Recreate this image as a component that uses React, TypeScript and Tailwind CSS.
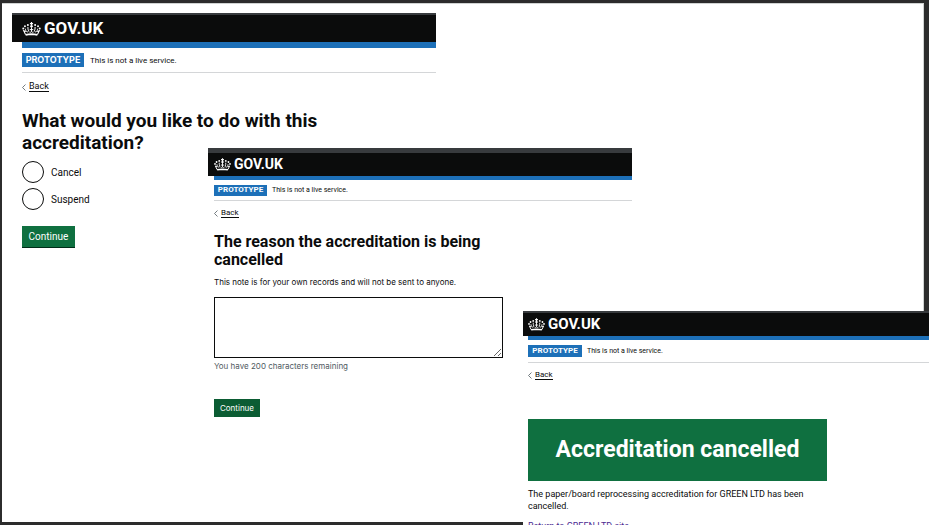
import type { ReactNode } from "react";

function Crown({ className }: { className: string }) {
  return (
    <svg viewBox="0 0 32 24" className={className} fill="none" stroke="currentColor" aria-hidden="true">
      <path d="M16 0v5.500M13.300 2.800h5.400" strokeWidth="2" />
      <g fill="currentColor" stroke="none">
        <circle cx="16" cy="7.300" r="2.200" />
        <circle cx="9.800" cy="5.300" r="1.700" />
        <circle cx="22.200" cy="5.300" r="1.700" />
        <circle cx="4.800" cy="7.300" r="1.700" />
        <circle cx="27.200" cy="7.300" r="1.700" />
        <circle cx="1.900" cy="11" r="1.700" />
        <circle cx="30.100" cy="11" r="1.700" />
        <path d="M5.500 20.500c7-1.600 14-1.600 21 0l-.7 3c-6-1-13.600-1-19.600 0z" />
      </g>
      <path d="M5.800 21.500 2.600 14.800l3.600 1.400M26.200 21.500l3.200-6.700-3.600 1.400" strokeWidth="1.800" />
      <path d="M5.500 11.500c.3 2.500 1 4.500 2.500 5.200s2.600-.3 3-1.500M26.500 11.500c-.3 2.500-1 4.500-2.500 5.200s-2.600-.3-3-1.500" strokeWidth="1.700" />
      <path d="M9.800 8.500c0 2.800.2 5 1.200 6.700M22.200 8.500c0 2.800-.2 5-1.200 6.700M16 9v7.500M13 13h6M12.500 17.200c1.200.6 2.400.6 3.500-.7 1.100 1.300 2.300 1.300 3.500.7" strokeWidth="1.700" />
    </svg>
  );
}

function Back({ className }: { className: string }) {
  return (
    <a href="#back" className={`flex w-max items-center gap-[3px] ${className}`}>
      <svg viewBox="0 0 4 7" className="h-[7px] w-1" fill="none" stroke="#505a5f" strokeWidth="0.800" aria-hidden="true">
        <path d="M3.500.5.500 3.500l3 3" />
      </svg>
      <span className="border-b border-current leading-[9px]">Back</span>
    </a>
  );
}

function Phase({ className, tag }: { className: string; tag: string }) {
  return (
    <div className={`flex items-center border-b border-[#d4d6d8] ${className}`}>
      <strong className={`flex items-center justify-center bg-[#1d70b8] font-bold text-white ${tag}`}>PROTOTYPE</strong>
      <span className="pt-px">This is not a live service.</span>
    </div>
  );
}

function Header({ className, children }: { className: string; children: ReactNode }) {
  return (
    <header className={`flex items-center border-[#383b3e] bg-[#0b0c0c] font-bold text-white ${className}`}>
      {children}
      <span>GOV.UK</span>
    </header>
  );
}

export default function App() {
  return (
    <main className="relative flex h-screen min-h-[525px] overflow-hidden bg-[#2c2c2c] pt-[3px] pr-[5px] pb-[3px] pl-[2px] font-['Roboto',sans-serif] text-[#0b0c0c]">
      <div className="flex-1 border-t border-r border-[#d0d3d2] bg-white" />

      <section className="absolute top-[13px] left-[12px] w-[424px]">
        <Header className="h-[29px] gap-[3px] border-t-2 pl-[10px] text-[17px]">
          <Crown className="h-[14px] w-[19px]" />
        </Header>
        <div className="pl-[10px]">
          <div className="h-[6px] bg-[#1d70b8]" />
          <Phase className="h-[25px] gap-[6px] text-[8px]" tag="h-[14px] w-[62px] font-['Inter',sans-serif] text-[9px]" />
          <Back className="mt-[9px] text-[9px]" />
          <form className="mt-[18px] flex flex-col items-start">
            <fieldset>
              <legend className="text-[19px] leading-[22px] font-bold">
                What would you like to do with this
                <br />
                accreditation?
              </legend>
              <div className="flex flex-col gap-[5px] pt-[7px] text-[10px]">
                <label className="flex items-center gap-[7px]">
                  <input type="radio" name="action" className="size-[22px] appearance-none rounded-full border border-[#0b0c0c] bg-white" />
                  Cancel
                </label>
                <label className="flex items-center gap-[7px]">
                  <input type="radio" name="action" className="size-[22px] appearance-none rounded-full border border-[#0b0c0c] bg-white" />
                  Suspend
                </label>
              </div>
            </fieldset>
            <button type="button" className="mt-4 h-[22px] w-[53px] border-b border-[#002d18] bg-[#0f7040] text-[10px] text-white">
              Continue
            </button>
          </form>
        </div>
      </section>

      <section className="absolute top-[148px] left-[208px] w-[424px] bg-white">
        <Header className="h-[28px] gap-[3px] border-t-[5px] pl-[6px] text-[14px]">
          <Crown className="h-[13px] w-[17px]" />
        </Header>
        <div className="pl-[6px]">
          <div className="h-1 bg-[#1d70b8]" />
          <Phase className="h-[21px] gap-[5px] text-[7px]" tag="h-[11px] w-[53px] text-[8px]" />
          <Back className="mt-[7px] text-[8px]" />
          <form className="mt-[15px] flex flex-col items-start">
            <label htmlFor="reason" className="text-[16px] leading-[18px] font-bold">
              The reason the accreditation is being
              <br />
              cancelled
            </label>
            <p className="mt-[7px] font-['Inter',sans-serif] text-[8px] leading-[12px]">This note is for your own records and will not be sent to anyone.</p>
            <textarea id="reason" className="mt-[9px] h-[61px] w-[289px] resize border border-[#0b0c0c] bg-white" />
            <p className="mt-[2px] font-['Inter',sans-serif] text-[8px] leading-[12px] text-[#505a5f]">You have 200 characters remaining</p>
            <button type="button" className="mt-[27px] h-[18px] w-[46px] bg-[#0b5c33] font-['Inter',sans-serif] text-[8px] text-white">
              Continue
            </button>
          </form>
        </div>
      </section>

      <section className="absolute top-[311px] right-0 bottom-0 left-[523px] overflow-hidden bg-white">
        <Header className="h-[25px] gap-[3px] border-t-2 pl-[5px] text-[15px]">
          <Crown className="h-[13px] w-[17px]" />
        </Header>
        <div className="pl-[5px]">
          <div className="h-1 bg-[#1d70b8]" />
          <Phase className="h-[23px] gap-[5px] text-[7px]" tag="h-[12px] w-[54px] text-[8px]" />
          <Back className="mt-[7px] text-[8px]" />
          <h1 className="mt-[39px] flex h-[62px] w-[299px] items-center justify-center bg-[#0f7040] text-[23px] font-bold text-white">
            Accreditation cancelled
          </h1>
          <p className="mt-[7px] text-[9px] leading-[12px]">
            The paper/board reprocessing accreditation for GREEN LTD has been
            <br />
            cancelled.
          </p>
          <a href="#site" className="mt-2 block w-max text-[9px] leading-[12px] text-[#4c2c92]">
            Return to GREEN LTD site
          </a>
        </div>
      </section>
    </main>
  );
}
